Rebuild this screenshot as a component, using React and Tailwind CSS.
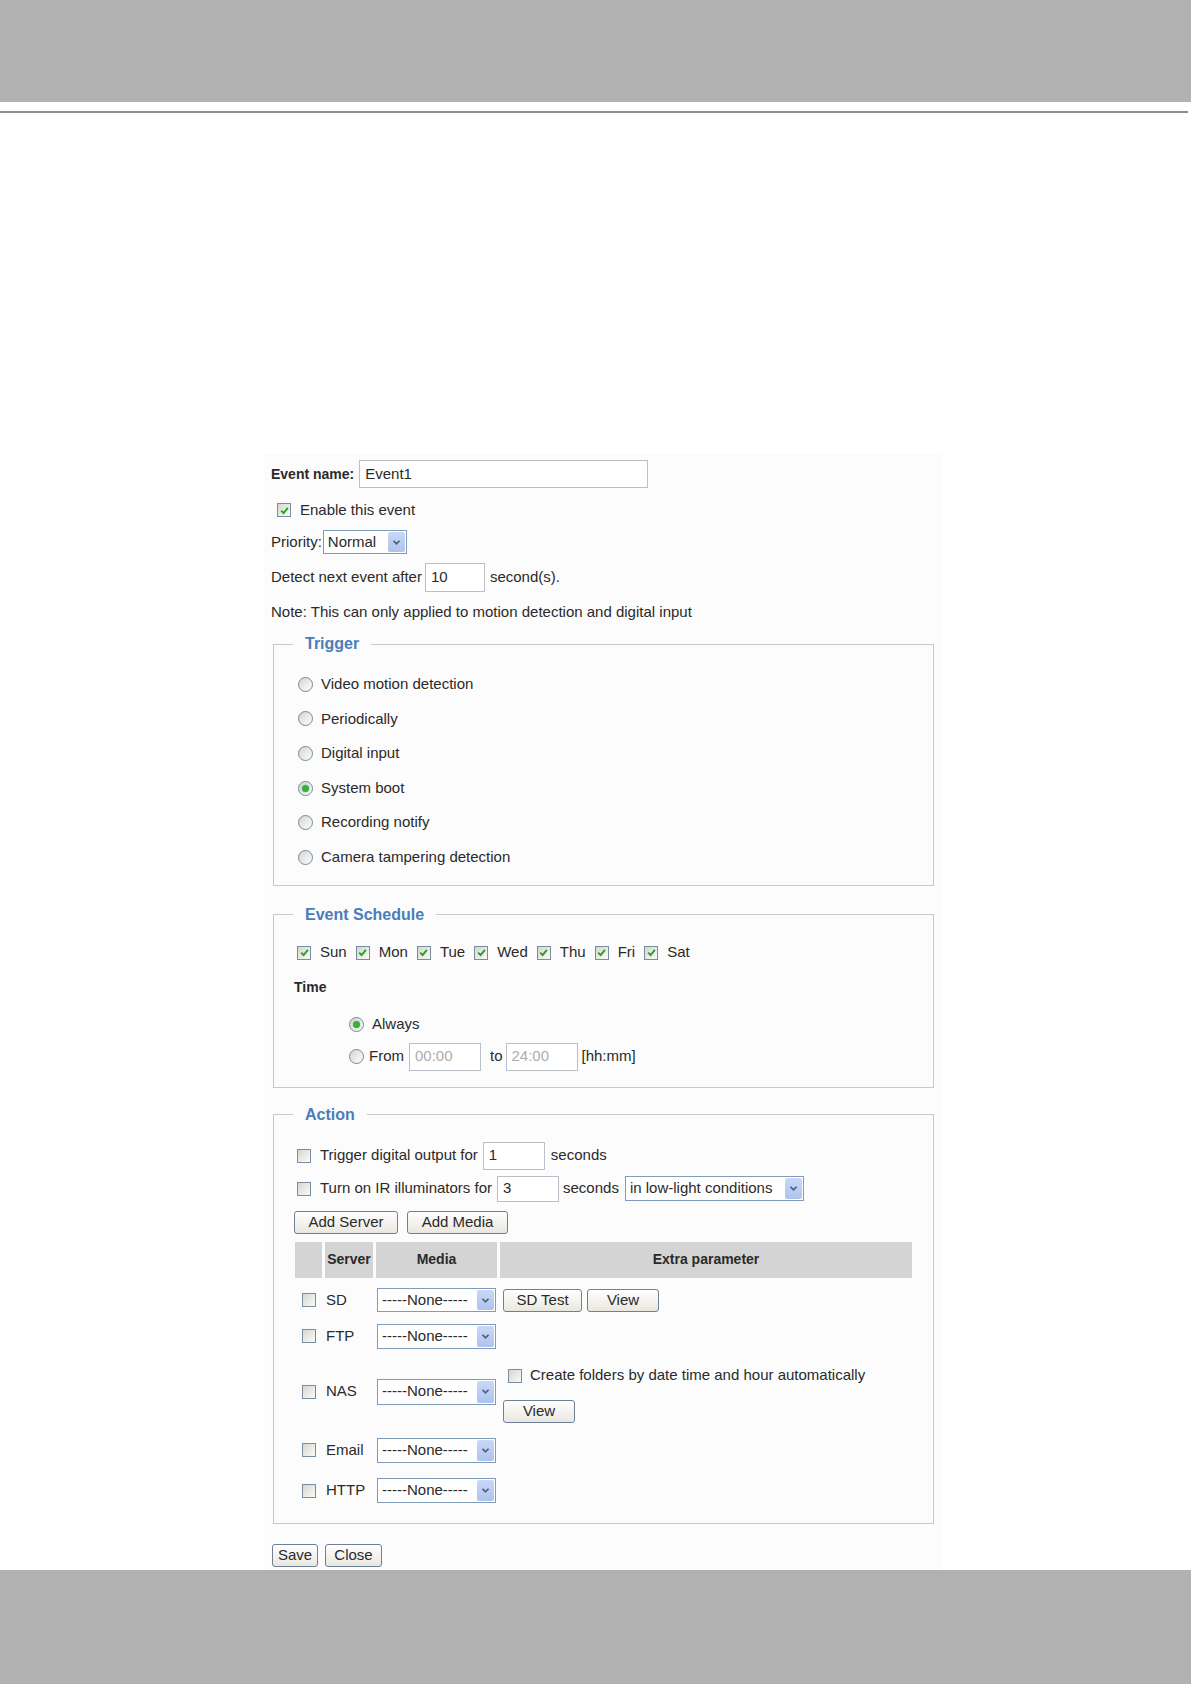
import React from "react";

function Check({ on }) {
  return (
    <span className="flex h-[14px] w-[14px] shrink-0 items-center justify-center border border-[#7a8ca0] bg-linear-to-br from-[#d6d6d0] to-[#fbfbf9]">
      {on && (
        <svg viewBox="0 0 9 9" className="h-[9px] w-[9px]">
          <path d="M1.2 4.6 L3.6 7 L7.9 1.8" fill="none" stroke="#22a322" strokeWidth="1.9" />
        </svg>
      )}
    </span>
  );
}

function Radio({ on }) {
  return (
    <span className="flex h-[15px] w-[15px] shrink-0 items-center justify-center rounded-full border border-[#7589a0] bg-linear-to-br from-[#d4d4d0] to-white">
      {on && <span className="h-[7px] w-[7px] rounded-full bg-[#3aae3a] shadow-[0_0_2px_#7fd17f]" />}
    </span>
  );
}

function Select({ value, className }) {
  return (
    <div className={`flex shrink-0 items-center border border-[#7f9db9] bg-white ${className}`}>
      <span className="flex-1 overflow-hidden whitespace-nowrap pl-[4px]">{value}</span>
      <span className="mr-[1px] flex h-[calc(100%-2px)] w-[17px] items-center justify-center rounded-[2px] bg-linear-to-b from-[#c9d8f8] to-[#aec3ec]">
        <svg viewBox="0 0 10 8" className="h-[7px] w-[9px]">
          <path d="M1.5 2 L5 5.5 L8.5 2" fill="none" stroke="#4b5e84" strokeWidth="2" />
        </svg>
      </span>
    </div>
  );
}

function Field({ value, className, dim }) {
  return (
    <div
      className={`flex shrink-0 items-center border border-[#b9c0c8] bg-white pl-[5px] ${dim ? "text-[#adadad]" : ""} ${className}`}
    >
      {value}
    </div>
  );
}

function Btn({ children, className }) {
  return (
    <div
      className={`flex h-[23px] shrink-0 items-center justify-center rounded-[3px] border border-[#6f7f98] bg-linear-to-b from-white to-[#e9e7df] ${className}`}
    >
      {children}
    </div>
  );
}

function Legend({ children }) {
  return (
    <legend className="ml-[19px] px-[12px] text-[16px] leading-[20px] font-bold text-[#4a7dbb]">{children}</legend>
  );
}

const triggers = [
  ["Video motion detection", false],
  ["Periodically", false],
  ["Digital input", false],
  ["System boot", true],
  ["Recording notify", false],
  ["Camera tampering detection", false],
];

const days = ["Sun", "Mon", "Tue", "Wed", "Thu", "Fri", "Sat"];

function App() {
  return (
    <div className="flex h-[1684px] w-[1191px] flex-col bg-white font-['Liberation_Sans',Arial,sans-serif] text-[15px] text-[#2a2a2a]">
      <div className="h-[102px] shrink-0 bg-[#b1b1b1]" />
      <div className="mt-[9px] h-[2px] w-[1188px] shrink-0 bg-[#8e8e8e]" />

      <div className="mt-[341px] ml-[264px] flex h-[1116px] w-[677px] shrink-0 flex-col bg-[#fcfcfc] pl-[7px]">
        <div className="mt-[6px] flex h-[28px] items-center">
          <span className="text-[14px] font-bold">Event name:</span>
          <Field value="Event1" className="ml-[5px] h-[28px] w-[289px]" />
        </div>

        <div className="mt-[8px] flex h-[28px] items-center gap-[9px] pl-[6px]">
          <Check on />
          <span>Enable this event</span>
        </div>

        <div className="flex h-[36px] items-center">
          <span>Priority:</span>
          <Select value="Normal" className="ml-[1px] h-[24px] w-[84px]" />
        </div>

        <div className="mt-[3px] flex h-[29px] items-center">
          <span>Detect next event after</span>
          <Field value="10" className="ml-[3px] h-[29px] w-[60px]" />
          <span className="ml-[5px]">second(s).</span>
        </div>

        <div className="mt-[11px] flex h-[18px] items-center">Note: This can only applied to motion detection and digital input</div>

        <fieldset className="mt-[13px] ml-[2px] w-[661px] border border-[#cfc8c1] pb-[10px]">
          <Legend>Trigger</Legend>
          <div className="flex flex-col pt-[13px]">
            {triggers.map(([label, on]) => (
              <div key={label} className="flex h-[34.6px] items-center gap-[8px] pl-[24px]">
                <Radio on={on} />
                <span>{label}</span>
              </div>
            ))}
          </div>
        </fieldset>

        <fieldset className="mt-[19px] ml-[2px] w-[661px] border border-[#cfc8c1] pb-[16px]">
          <Legend>Event Schedule</Legend>
          <div className="mt-[17px] flex h-[22px] items-center gap-[9px] pl-[23px]">
            {days.map((d) => (
              <div key={d} className="flex items-center gap-[9px]">
                <Check on />
                <span>{d}</span>
              </div>
            ))}
          </div>
          <div className="mt-[13px] flex h-[22px] items-center pl-[20px] text-[14px] font-bold">Time</div>
          <div className="mt-[15px] flex h-[22px] items-center gap-[8px] pl-[75px]">
            <Radio on />
            <span>Always</span>
          </div>
          <div className="mt-[7px] flex h-[28px] items-center pl-[75px]">
            <Radio />
            <span className="ml-[5px]">From</span>
            <Field value="00:00" dim className="ml-[5px] h-[28px] w-[72px]" />
            <span className="ml-[9px]">to</span>
            <Field value="24:00" dim className="ml-[3px] h-[28px] w-[72px]" />
            <span className="ml-[4px]">[hh:mm]</span>
          </div>
        </fieldset>

        <fieldset className="mt-[17px] ml-[2px] w-[661px] border border-[#cfc8c1] pb-[12px]">
          <Legend>Action</Legend>
          <div className="mt-[17px] flex h-[28px] items-center pl-[23px]">
            <Check />
            <span className="ml-[9px]">Trigger digital output for</span>
            <Field value="1" className="ml-[5px] h-[28px] w-[62px]" />
            <span className="ml-[6px]">seconds</span>
          </div>
          <div className="mt-[6px] flex h-[26px] items-center pl-[23px]">
            <Check />
            <span className="ml-[9px]">Turn on IR illuminators for</span>
            <Field value="3" className="ml-[5px] h-[26px] w-[62px]" />
            <span className="ml-[4px]">seconds</span>
            <Select value="in low-light conditions" className="ml-[6px] h-[25px] w-[179px]" />
          </div>
          <div className="mt-[9px] flex items-center gap-[9px] pl-[20px]">
            <Btn className="w-[104px]">Add Server</Btn>
            <Btn className="w-[101px]">Add Media</Btn>
          </div>

          <div className="mt-[8px] ml-[21px] grid w-[617px] grid-cols-[27px_48px_121px_1fr] gap-x-[3px]">
            <div className="h-[36px] bg-[#d4d4d4]" />
            <div className="flex h-[36px] items-center justify-center bg-[#d4d4d4] text-[14px] font-bold">Server</div>
            <div className="flex h-[36px] items-center justify-center bg-[#d4d4d4] text-[14px] font-bold">Media</div>
            <div className="flex h-[36px] items-center justify-center bg-[#d4d4d4] text-[14px] font-bold">Extra parameter</div>

            <div className="mt-[4px] flex h-[37px] items-center pl-[7px]"><Check /></div>
            <div className="mt-[4px] flex h-[37px] items-center pl-[1px]">SD</div>
            <div className="mt-[4px] flex h-[37px] items-center pl-[1px]"><Select value="-----None-----" className="h-[24px] w-[119px]" /></div>
            <div className="mt-[4px] flex h-[37px] items-center gap-[5px] pl-[3px]">
              <Btn className="w-[79px]">SD Test</Btn>
              <Btn className="w-[72px]">View</Btn>
            </div>

            <div className="flex h-[35px] items-center pl-[7px]"><Check /></div>
            <div className="flex h-[35px] items-center pl-[1px]">FTP</div>
            <div className="flex h-[35px] items-center pl-[1px]"><Select value="-----None-----" className="h-[25px] w-[119px]" /></div>
            <div className="h-[35px]" />

            <div className="flex h-[76px] items-center pl-[7px]"><Check /></div>
            <div className="flex h-[76px] items-center pl-[1px]">NAS</div>
            <div className="flex h-[76px] items-center pl-[1px]"><Select value="-----None-----" className="h-[26px] w-[119px]" /></div>
            <div className="flex h-[76px] flex-col justify-center pt-[3px] pl-[3px]">
              <div className="flex h-[24px] items-center gap-[8px] pl-[5px]">
                <Check />
                <span>Create folders by date time and hour automatically</span>
              </div>
              <Btn className="mt-[12px] w-[72px]">View</Btn>
            </div>

            <div className="flex h-[41px] items-center pl-[7px]"><Check /></div>
            <div className="flex h-[41px] items-center pl-[1px]">Email</div>
            <div className="flex h-[41px] items-center pl-[1px]"><Select value="-----None-----" className="h-[25px] w-[119px]" /></div>
            <div className="h-[41px]" />

            <div className="flex h-[40px] items-center pl-[7px]"><Check /></div>
            <div className="flex h-[40px] items-center pl-[1px]">HTTP</div>
            <div className="flex h-[40px] items-center pl-[1px]"><Select value="-----None-----" className="h-[25px] w-[119px]" /></div>
            <div className="h-[40px]" />
          </div>
        </fieldset>

        <div className="mt-[20px] flex items-center gap-[7px] pl-[1px]">
          <Btn className="w-[46px]">Save</Btn>
          <Btn className="w-[57px]">Close</Btn>
        </div>
      </div>

      <div className="flex-1 bg-[#b1b1b1]" />
    </div>
  );
}

export default App;
